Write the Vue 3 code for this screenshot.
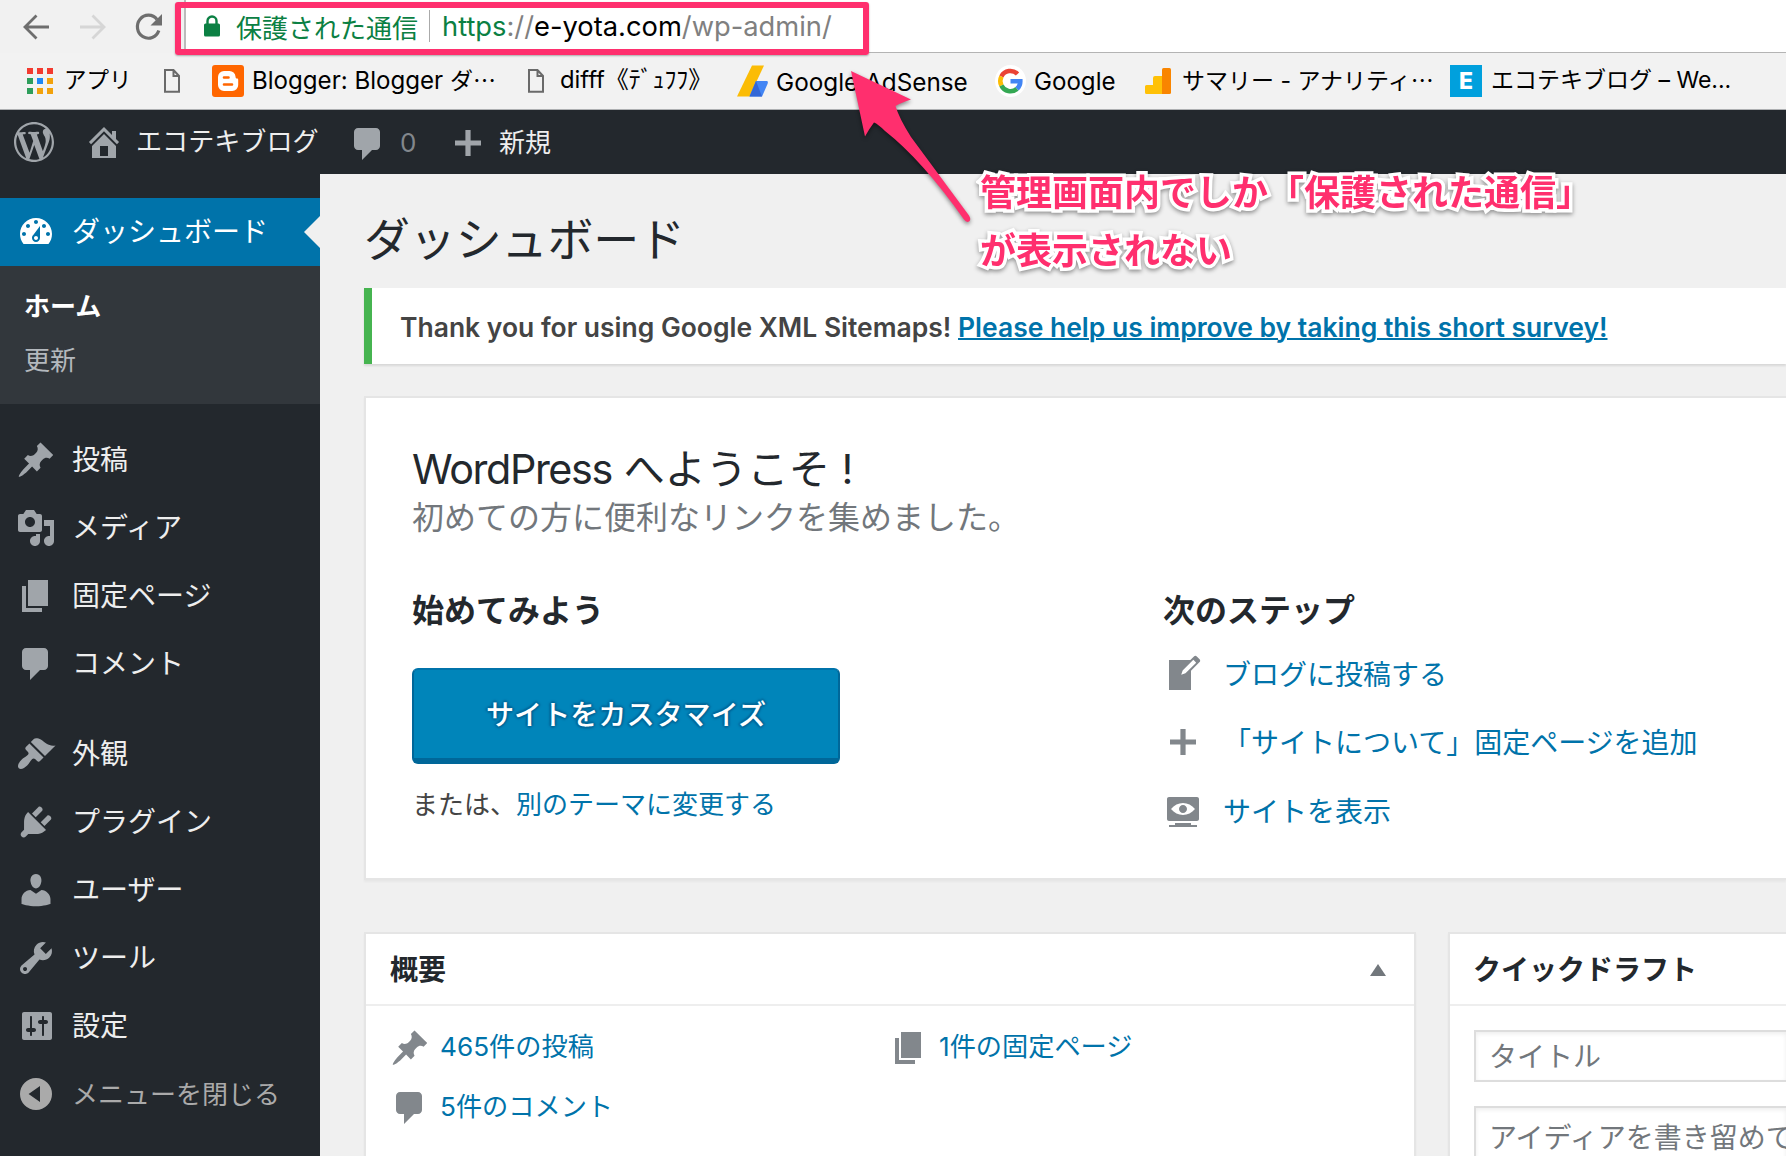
<script setup>
const icons = {
  wordpress: 'M20 10c0-5.51-4.49-10-10-10C4.48 0 0 4.49 0 10c0 5.52 4.48 10 10 10 5.51 0 10-4.48 10-10zM7.78 15.37L4.37 6.22c.55-.02 1.17-.08 1.17-.08.5-.06.44-1.13-.06-1.11 0 0-1.45.11-2.37.11-.18 0-.37 0-.58-.01C4.12 2.69 6.87 1.11 10 1.11c2.33 0 4.45.87 6.05 2.34-.68-.11-1.65.39-1.65 1.58 0 .74.45 1.36.9 2.1.35.61.55 1.36.55 2.46 0 1.49-1.4 5-1.4 5l-3.03-8.37c.54-.02.82-.17.82-.17.5-.05.44-1.25-.06-1.22 0 0-1.44.12-2.38.12-.87 0-2.33-.12-2.33-.12-.5-.03-.56 1.2-.06 1.22l.92.08 1.26 3.41zM17.41 10c.24-.64.74-1.87.43-4.25.7 1.29 1.05 2.71 1.05 4.25 0 3.29-1.73 6.24-4.4 7.78.97-2.59 1.94-5.2 2.92-7.78zM6.1 18.09C3.12 16.65 1.11 13.53 1.11 10c0-1.3.23-2.48.72-3.59C3.25 10.3 4.67 14.2 6.1 18.09zm4.03-6.63l2.58 6.98c-.86.29-1.76.45-2.71.45-.79 0-1.57-.11-2.29-.33.81-2.38 1.62-4.74 2.42-7.1z',
  home: 'M16 8.5l1.53 1.53-1.06 1.06L10 4.6l-6.47 6.49-1.06-1.06L10 2.5l4 4v-2h2v4zm-6-2.46l6 5.99V18H4v-5.97zM12 17v-5H8v5h4z',
  plus: 'M16.5 8.7v2.6h-5.2v5.2H8.7v-5.2H3.5V8.7h5.2V3.5h2.6v5.2z',
  dashboard: 'M3.76 16h12.48c1.1-1.37 1.76-3.11 1.76-5 0-4.42-3.58-8-8-8s-8 3.58-8 8c0 1.89.66 3.63 1.76 5zM10 4c.55 0 1 .45 1 1s-.45 1-1 1-1-.45-1-1 .45-1 1-1zM6 6c.55 0 1 .45 1 1s-.45 1-1 1-1-.45-1-1 .45-1 1-1zm8 0c.55 0 1 .45 1 1s-.45 1-1 1-1-.45-1-1 .45-1 1-1zm-5.37 5.55L12 7v6c0 1.1-.9 2-2 2s-2-.9-2-2c0-.57.24-1.08.63-1.45zM4 10c.55 0 1 .45 1 1s-.45 1-1 1-1-.45-1-1 .45-1 1-1zm12 0c.55 0 1 .45 1 1s-.45 1-1 1-1-.45-1-1 .45-1 1-1zm-5 3c0-.55-.45-1-1-1s-1 .45-1 1 .45 1 1 1 1-.45 1-1z',
  post: 'M10.44 3.02l1.82-1.82 6.36 6.35-1.83 1.82c-1.05-.68-2.48-.57-3.41.36l-.75.75c-.92.93-1.04 2.35-.35 3.41l-1.83 1.82-2.41-2.41-2.8 2.79c-.42.42-3.38 2.71-3.8 2.29s1.86-3.39 2.28-3.81l2.79-2.79L4.1 9.36l1.83-1.82c1.05.69 2.48.57 3.4-.36l.75-.75c.93-.92 1.05-2.35.36-3.41z',
  media: 'M13 11V4c0-.55-.45-1-1-1h-1.67L9 1H5L3.67 3H2c-.55 0-1 .45-1 1v7c0 .55.45 1 1 1h10c.55 0 1-.45 1-1zM7 4.5c1.38 0 2.5 1.12 2.5 2.5S8.38 9.5 7 9.5 4.5 8.38 4.5 7 5.62 4.5 7 4.5zM14 6h5v10.5c0 1.38-1.12 2.5-2.5 2.5S14 17.88 14 16.5s1.12-2.5 2.5-2.5c.17 0 .34.02.5.05V9h-3V6zm-4 8.05V13h2v3.5c0 1.38-1.12 2.5-2.5 2.5S7 17.88 7 16.5 8.12 14 9.5 14c.17 0 .34.02.5.05z',
  page: 'M6 15V2h10v13H6zm-1 1h8v2H3V5h2v11z',
  comment: 'M5 2h9c1.1 0 2 .9 2 2v7c0 1.1-.9 2-2 2h-2l-5 5v-5H5c-1.1 0-2-.9-2-2V4c0-1.1.9-2 2-2z',
  appearance: 'M14.48 11.06L7.41 3.99l1.5-1.5c.5-.56 2.3-.47 3.51.32 1.21.8 1.43 1.28 2.91 2.1 1.18.64 2.45 1.26 4.45.85zm-.71.71L6.7 4.7 4.93 6.47c-.39.39-.39 1.02 0 1.41l1.06 1.06c.39.39.39 1.03 0 1.42-.6.6-1.43 1.11-2.21 1.69-.35.26-.7.53-1.01.84C1.43 14.23.4 16.08 1.4 17.07c.99 1 2.84-.03 4.18-1.36.31-.31.58-.66.85-1.02.57-.78 1.08-1.61 1.69-2.21.39-.39 1.02-.39 1.41 0l1.06 1.06c.39.39 1.02.39 1.41 0z',
  plugins: 'M13.11 4.36L9.87 7.6 8 5.73l3.24-3.24c.35-.34 1.05-.2 1.56.32.52.51.66 1.21.31 1.55zm-8 1.77l.91-1.12 9.01 9.01-1.19.84c-.71.71-2.63 1.16-3.82 1.16H6.14L4.9 17.26c-.59.59-1.54.59-2.12 0-.59-.58-.59-1.53 0-2.12l1.24-1.24v-3.88c0-1.13.4-3.19 1.09-3.89zm7.26 3.97l3.24-3.24c.34-.35 1.04-.21 1.55.31.52.51.66 1.21.31 1.55l-3.24 3.25z',
  users: 'M10 9.25c-2.27 0-2.73-3.44-2.73-3.44C7 4.02 7.82 2 9.97 2c2.16 0 2.98 2.02 2.71 3.81 0 0-.41 3.44-2.68 3.44zm0 2.57L12.72 10c2.39 0 4.52 2.33 4.52 4.53v2.49s-3.65 1.13-7.24 1.13c-3.65 0-7.24-1.13-7.24-1.13v-2.49c0-2.25 1.94-4.48 4.47-4.48z',
  tools: 'M16.68 9.77c-1.34 1.34-3.3 1.67-4.95.99l-5.41 6.52c-.99.99-2.59.99-3.58 0s-.99-2.59 0-3.57l6.52-5.42c-.68-1.65-.35-3.61.99-4.95 1.28-1.28 3.12-1.62 4.72-1.06l-2.89 2.89 2.82 2.82 2.86-2.87c.53 1.58.18 3.39-1.08 4.65zM3.81 16.21c.4.39 1.04.39 1.43 0 .4-.4.4-1.04 0-1.43-.39-.4-1.03-.4-1.43 0-.39.39-.39 1.03 0 1.43z',
  settings: 'M18 16V4c0-.55-.45-1-1-1H4c-.55 0-1 .45-1 1v12c0 .55.45 1 1 1h13c.55 0 1-.45 1-1zM8 11h1c.55 0 1 .45 1 1s-.45 1-1 1H8v1.5c0 .28-.22.5-.5.5s-.5-.22-.5-.5V13H6c-.55 0-1-.45-1-1s.45-1 1-1h1V5.5c0-.28.22-.5.5-.5s.5.22.5.5V11zm5-2h-1c-.55 0-1-.45-1-1s.45-1 1-1h1V5.5c0-.28.22-.5.5-.5s.5.22.5.5V7h1c.55 0 1 .45 1 1s-.45 1-1 1h-1v5.5c0 .28-.22.5-.5.5s-.5-.22-.5-.5V9z',
  collapse: 'M10 2a8 8 0 1 1 0 16a8 8 0 1 1 0-16zM12 6L6.3 10L12 14z',
  write: 'M16.89 1.2l1.41 1.41c.39.39.39 1.02 0 1.41L14 8.33V18H3V3h10.67l1.8-1.8c.4-.39 1.03-.4 1.42 0zm-5.66 8.48l5.37-5.36-1.42-1.42-5.36 5.37-.71 2.12z',
  view: 'M18 14V4c0-.55-.45-1-1-1H3c-.55 0-1 .45-1 1v10c0 .55.45 1 1 1h14c.55 0 1-.45 1-1zm-8-8c2.3 0 4.4 1.14 6 3-1.6 1.86-3.7 3-6 3s-4.4-1.14-6-3c1.6-1.86 3.7-3 6-3zm2 3c0-1.1-.9-2-2-2s-2 .9-2 2 .9 2 2 2 2-.9 2-2zm2 8h3v1H3v-1h3v-1h8v1z',
}

const menuGroups = [
  [
    { icon: 'post', label: '投稿' },
    { icon: 'media', label: 'メディア' },
    { icon: 'page', label: '固定ページ' },
    { icon: 'comment', label: 'コメント' },
  ],
  [
    { icon: 'appearance', label: '外観' },
    { icon: 'plugins', label: 'プラグイン' },
    { icon: 'users', label: 'ユーザー' },
    { icon: 'tools', label: 'ツール' },
    { icon: 'settings', label: '設定' },
  ],
]

const steps = [
  { icon: 'write', label: 'ブログに投稿する' },
  { icon: 'plus', label: '「サイトについて」固定ページを追加' },
  { icon: 'view', label: 'サイトを表示' },
]

const glance = [
  { icon: 'post', label: '465件の投稿' },
  { icon: 'page', label: '1件の固定ページ' },
  { icon: 'comment', label: '5件のコメント' },
]

const appColors = ['#f33b30', '#f33b30', '#f33b30', '#2e9e5b', '#1e88f7', '#f2a20c', '#2e9e5b', '#f2a20c', '#f2a20c']
</script>

<template>
  <div class="screen" lang="ja">
    <header class="toolbar">
      <div class="nav">
        <svg class="nav-back" width="28" height="28" viewBox="0 0 28 28"><path d="M27 14H3M14.500 2.500L3 14l11.500 11.500" /></svg>
        <svg class="nav-forward" width="28" height="28" viewBox="0 0 28 28"><path d="M1 14h24M13.500 2.500L25 14L13.500 25.500" /></svg>
        <svg class="nav-reload" width="30" height="30" viewBox="0 0 30 30">
          <path d="M24.800 18.500A11 11.500 0 1 1 23 7.500" fill="none" stroke-width="3.200" />
          <path d="M28 2v11.500H16.500z" class="solid" />
        </svg>
      </div>
      <div class="omnibox">
        <svg class="lock" width="18" height="22" viewBox="0 0 18 22">
          <path d="M4.500 10V6a4.500 4.500 0 0 1 9 0v4" fill="none" stroke="#0b8043" stroke-width="2.400" />
          <rect x="1" y="8.500" width="16" height="13" rx="1.500" fill="#0b8043" />
        </svg>
        <span class="secure">保護された通信</span>
        <span class="divider"></span>
        <span class="url"><b>https</b>://<i>e-yota.com</i>/wp-admin/</span>
      </div>
    </header>

    <nav class="bookmarks">
      <div class="bookmark apps">
        <div class="apps-grid"><span v-for="(c, i) in appColors" :key="i" :style="{ background: c }"></span></div>
        <span class="label">アプリ</span>
      </div>
      <div class="bookmark">
        <svg class="file" width="16" height="26" viewBox="0 0 16 26"><path d="M1 2h8.500L15 8v15.800H1zM9.500 2v6H15" /></svg>
      </div>
      <div class="bookmark blogger">
        <svg width="32" height="32" viewBox="0 0 32 32">
          <rect width="32" height="32" rx="3" fill="#ff6600" />
          <path d="M12 6h5.500a6 6 0 0 1 6 5.500c.1 1.600.5 2 1.500 2c.8 0 1.200.5 1.200 1.200V20a6 6 0 0 1-6 6H12a6 6 0 0 1-6-6v-8a6 6 0 0 1 6-6z" fill="#fff" />
          <path d="M12 12.500h4.500M12 19.500h8" stroke="#ff6600" stroke-width="2.600" stroke-linecap="round" />
        </svg>
        <span class="label">Blogger: Blogger <span class="kana">ダ<span class="dots">…</span></span></span>
      </div>
      <div class="bookmark difff">
        <svg class="file" width="16" height="26" viewBox="0 0 16 26"><path d="M1 2h8.500L15 8v15.800H1zM9.500 2v6H15" /></svg>
        <span class="label">difff《ﾃﾞｭﾌﾌ》</span>
      </div>
      <div class="bookmark adsense">
        <svg width="31" height="32" viewBox="0 0 31 32">
          <path d="M15 0.500h12L12.500 31.500H0z" fill="#fbbc05" />
          <path d="M19 16h11q1.500.5.500 3L25 31.500H12.500z" fill="#4285f4" />
          <path d="M19 16L25 31.500H12.500z" fill="#3367d6" />
        </svg>
        <span class="label">Google AdSense</span>
      </div>
      <div class="bookmark google">
        <svg width="31" height="32" viewBox="0 0 31 32">
          <ellipse cx="15.500" cy="16" rx="15.500" ry="16" fill="#fff" />
          <g fill="none" stroke-width="4.600">
            <path d="M6.400 11.500A10 10 0 0 1 22.500 9" stroke="#ea4335" />
            <path d="M6.400 20.500A10 10 0 0 1 6.400 11.500" stroke="#fbbc05" />
            <path d="M22 23.800A10 10 0 0 1 6.400 20.500" stroke="#34a853" />
            <path d="M15.500 16.200H25.300A10 10 0 0 1 22 23.800" stroke="#4285f4" />
          </g>
        </svg>
        <span class="label">Google</span>
      </div>
      <div class="bookmark analytics">
        <svg width="26" height="26" viewBox="0 0 26 26">
          <path d="M1.500 17H8V10q0-2 2-2h7v18H1.500Q0 26 0 24.500v-6Q0 17 1.500 17z" fill="#ffc107" />
          <path d="M18.500 0h6Q26 0 26 1.500v23q0 1.500-1.500 1.500H17V1.500Q17 0 18.500 0z" fill="#f98500" />
        </svg>
        <span class="label">サマリー - アナリティ<span class="dots">…</span></span>
      </div>
      <div class="bookmark ecoteki">
        <span class="favicon">E</span>
        <span class="label">エコテキブログ – We...</span>
      </div>
    </nav>

    <div class="adminbar">
      <svg class="dashicon wp" viewBox="0 0 20 20"><path :d="icons.wordpress" /></svg>
      <svg class="dashicon home" viewBox="0 0 20 20"><path :d="icons.home" /></svg>
      <span class="site">エコテキブログ</span>
      <svg class="dashicon bubble" viewBox="0 0 20 20"><path :d="icons.comment" /></svg>
      <span class="count">0</span>
      <svg class="dashicon add" viewBox="0 0 20 20"><path :d="icons.plus" /></svg>
      <span class="new">新規</span>
    </div>

    <div class="body">
      <aside class="sidebar">
        <a class="item current">
          <svg class="dashicon" viewBox="0 0 20 20"><path :d="icons.dashboard" /></svg>
          <span>ダッシュボード</span>
        </a>
        <div class="submenu">
          <a class="on">ホーム</a>
          <a>更新</a>
        </div>
        <div v-for="(group, g) in menuGroups" :key="g" class="group">
          <a v-for="m in group" :key="m.label" class="item">
            <svg class="dashicon" viewBox="0 0 20 20"><path :d="icons[m.icon]" /></svg>
            <span>{{ m.label }}</span>
          </a>
        </div>
        <a class="item collapse">
          <svg class="dashicon" viewBox="0 0 20 20"><path fill-rule="evenodd" :d="icons.collapse" /></svg>
          <span>メニューを閉じる</span>
        </a>
      </aside>

      <main class="content">
        <h1>ダッシュボード</h1>
        <div class="notice">
          <p>Thank you for using Google XML Sitemaps! <a>Please help us improve by taking this short survey!</a></p>
        </div>

        <section class="welcome">
          <h2><span class="brand">WordPress</span> へようこそ !</h2>
          <p class="about">初めての方に便利なリンクを集めました。</p>
          <div class="columns">
            <div class="start">
              <h3>始めてみよう</h3>
              <button type="button">サイトをカスタマイズ</button>
              <p>または、<a>別のテーマに変更する</a></p>
            </div>
            <div class="next">
              <h3>次のステップ</h3>
              <ul>
                <li v-for="s in steps" :key="s.label">
                  <svg class="dashicon" viewBox="0 0 20 20"><path :d="icons[s.icon]" /></svg>
                  <a>{{ s.label }}</a>
                </li>
              </ul>
            </div>
          </div>
        </section>

        <div class="boxes">
          <section class="box overview">
            <header><h2>概要</h2><span class="toggle"></span></header>
            <ul>
              <li v-for="x in glance" :key="x.label">
                <svg class="dashicon" viewBox="0 0 20 20"><path :d="icons[x.icon]" /></svg>
                <a>{{ x.label }}</a>
              </li>
            </ul>
          </section>
          <section class="box quick">
            <header><h2>クイックドラフト</h2></header>
            <div class="field title">タイトル</div>
            <div class="field draft">アイディアを書き留めて</div>
          </section>
        </div>
      </main>
    </div>

    <div class="highlight"></div>
    <svg class="arrow" width="150" height="180" viewBox="840 60 150 180">
      <path d="M851 71L911 99.500Q900 103 895.500 106Q899 118 911 137L969 215.500Q971.500 219.500 969 221.500Q966.500 223 964 219.500Q922 160 885 131Q878 124 874 122.500Q869 129 865 136.500Z" />
    </svg>
    <p class="caption">管理画面内でしか「保護された通信」<br>が表示されない</p>
  </div>
</template>

<style>
body { margin: 0; }
</style>

<style scoped>
.screen {
  position: relative;
  width: 1786px;
  height: 1156px;
  overflow: hidden;
  display: flex;
  flex-direction: column;
  background: #f0f0f0;
  font-family: Inter, "Noto Sans CJK JP", sans-serif;
  color: #444;
}
h1, h2, h3, p, ul { margin: 0; padding: 0; font-weight: 400; }
ul { list-style: none; }
span, a, p, h1, h2, h3, li { white-space: nowrap; }
svg { flex: none; display: block; }
.dashicon { width: 40px; height: 40px; fill: #82878c; }

.toolbar { display: flex; height: 53px; background: #f1f1f1; flex: none; }
.nav { display: flex; width: 184px; box-sizing: border-box; padding-left: 22px; align-items: center; }
.nav svg { fill: none; stroke: #6e6e6e; stroke-width: 2.8; }
.nav-back { margin-right: 29px; }
.nav .nav-forward { stroke: #d6d6d6; margin-right: 27px; }
.nav .solid { fill: #6e6e6e; stroke: none; }
.omnibox {
  flex: 1;
  display: flex;
  align-items: center;
  box-sizing: border-box;
  padding: 0 0 0 17px;
  background: #fff;
  border-left: 2px solid #bbb;
  border-bottom: 1px solid #b4b4b4;
  font-size: 26px;
}
.lock { margin-right: 15px; }
.secure { color: #0b8043; width: 193px; }
.divider { width: 1px; height: 32px; background: #aaa; margin-right: 12px; }
.url { color: #808080; font-size: 27.3px; }
.url b { color: #0b8043; font-weight: 400; }
.url i { color: #000; font-style: normal; }

.bookmarks {
  display: grid;
  grid-template-columns: 137px 48px 316px 209px 258px 150px 305px 1fr;
  align-items: center;
  flex: none;
  height: 57px;
  box-sizing: border-box;
  padding-left: 27px;
  background: #f2f2f2;
  border-bottom: 1px solid #aeb0b2;
  color: #000;
  font-size: 23px;
}
.bookmark { display: flex; align-items: center; gap: 9px; }
.bookmark.analytics { gap: 11px; }
.bookmark.apps { gap: 11px; font-size: 22.5px; }
.bookmark.difff { gap: 16px; font-size: 23.8px; }
.blogger, .google { font-size: 24.1px; }
.adsense { font-size: 24.3px; }
.bookmark.blogger, .bookmark.adsense, .bookmark.google { gap: 8px; }
.label { line-height: 34px; padding-bottom: 2px; }
.adsense .label, .google .label { padding: 1px 0 0; }
.kana { font-size: 23px; }
.apps-grid { display: grid; grid-template-columns: repeat(3, 6px); gap: 4px; }
.apps-grid span { height: 6px; }
.file path { fill: none; stroke: #6a6a6a; stroke-width: 2; }
.dots { font-family: "Noto Sans CJK JP", sans-serif; }
.favicon {
  width: 32px;
  height: 32px;
  background: #00a0dd;
  color: #fff;
  font-weight: 800;
  line-height: 32px;
  text-align: center;
}

.adminbar {
  display: flex;
  align-items: center;
  flex: none;
  height: 64px;
  box-sizing: border-box;
  padding-left: 14px;
  background: #23282d;
  color: #eee;
  font-size: 26px;
}
.adminbar .dashicon { fill: #a0a5aa; }
.adminbar .home { margin-left: 30px; }
.adminbar .site { margin-left: 12px; width: 212px; font-size: 26.1px; padding-bottom: 4px; }
.adminbar .bubble { margin-top: 4px; }
.adminbar .count { margin-left: 12px; width: 48px; color: #82878c; }
.adminbar .add { margin-top: 2px; }
.adminbar .new { margin-left: 11px; padding-bottom: 4px; }

.body { display: flex; flex: 1; min-height: 0; }
.sidebar { width: 320px; flex: none; box-sizing: border-box; padding-top: 24px; background: #23282d; }
.item { display: flex; align-items: center; height: 68px; padding-left: 16px; gap: 16px; color: #eee; font-size: 28px; }
.item span { padding-bottom: 4px; }
.item .dashicon { fill: #a0a5aa; }
.item.current { position: relative; background: #0073aa; color: #fff; }
.item.current .dashicon { fill: #fff; }
.item.current::after {
  content: "";
  position: absolute;
  right: 0;
  top: 18px;
  border: 16px solid transparent;
  border-right-color: #f0f0f0;
  border-left: 0;
}
.submenu { display: flex; flex-direction: column; height: 138px; box-sizing: border-box; padding: 13px 24px 0; background: #32373c; }
.submenu a { height: 54px; line-height: 55px; font-size: 26px; color: #b4b9be; }
.submenu .on { color: #fff; font-weight: 700; }
.group { margin-top: 22px; }
.item.collapse { color: #aaa; font-size: 26px; }
.item.collapse .dashicon { fill: #aaa; }

.content { width: 1466px; box-sizing: border-box; padding-left: 44px; flex: none; }
h1 { font-size: 46px; line-height: 60px; padding-top: 35px; height: 114px; box-sizing: border-box; color: #23282d; letter-spacing: -0.15px; }
.notice {
  height: 76px;
  box-sizing: border-box;
  border-left: 8px solid #46b450;
  background: #fff;
  box-shadow: 0 2px 2px rgba(0, 0, 0, .1);
  padding-left: 28px;
  font-size: 26.47px;
}
.notice p { font-weight: 600; line-height: 78px; }
a { color: #0073aa; }
.notice a { text-decoration: underline; text-decoration-thickness: 2px; }
.sidebar a { color: inherit; }
.sidebar .item { color: #eee; }
.sidebar .submenu a { color: #b4b9be; }
.sidebar .submenu .on, .sidebar .current { color: #fff; }
.sidebar .collapse { color: #aaa; }

.welcome {
  height: 484px;
  margin-top: 32px;
  box-sizing: border-box;
  border: 2px solid #e5e5e5;
  border-right: 0;
  background: #fff;
  box-shadow: 0 2px 2px rgba(0, 0, 0, .04);
  padding: 44px 0 0 46px;
}
.welcome h2 { font-size: 41.3px; line-height: 54px; color: #23282d; }
.brand { letter-spacing: -1.4px; }
.about { font-size: 32px; line-height: 44px; color: #72777c; }
.columns { display: flex; margin-top: 49px; }
.start { width: 751px; }
h3 { font-size: 32px; font-weight: 700; line-height: 44px; color: #23282d; }
button {
  display: block;
  width: 428px;
  height: 96px;
  margin: 35px 0 0;
  padding: 0 0 4px;
  border: 2px solid #006799;
  border-top-color: #0073aa;
  border-bottom-width: 6px;
  border-radius: 6px;
  background: #0085ba;
  color: #fff;
  font: 500 28.1px Inter, "Noto Sans CJK JP", sans-serif;
  text-shadow: 0 -2px 2px #006799, 2px 0 2px #006799, 0 2px 2px #006799, -2px 0 2px #006799;
}
.start p { margin-top: 21px; font-size: 26px; line-height: 40px; }
.next ul { margin-top: 7px; }
.next li { display: flex; align-items: center; height: 68.3px; gap: 20px; font-size: 28px; }
.next li a { padding-bottom: 2px; }

.boxes { display: flex; gap: 32px; margin-top: 52px; }
.box {
  box-sizing: border-box;
  height: 260px;
  border: 2px solid #e5e5e5;
  background: #fff;
  box-shadow: 0 2px 2px rgba(0, 0, 0, .04);
}
.overview { width: 1052px; flex: none; }
.quick { flex: 1; min-width: 0; border-right: 0; }
.box header { display: flex; align-items: center; justify-content: space-between; height: 70px; padding: 0 28px 0 24px; border-bottom: 2px solid #eee; }
.quick header { padding-left: 23px; }
.box h2 { font-size: 28px; font-weight: 700; line-height: 40px; padding-top: 2px; color: #23282d; }
.toggle { margin-top: 2px; border: 8px solid transparent; border-bottom: 12px solid #72777c; border-top: 0; }
.overview ul { display: grid; grid-template-columns: 499px 1fr; padding: 12px 0 0 24px; }
.overview li { display: flex; align-items: center; height: 60px; gap: 10px; font-size: 26.2px; }
.overview li a { padding-bottom: 7px; }
.field { box-sizing: border-box; margin-left: 24px; border: 2px solid #ddd; border-right: 0; padding-left: 13px; font-size: 28px; color: #72777c; white-space: nowrap; box-shadow: inset 0 2px 4px rgba(0, 0, 0, .07); }
.title { margin-top: 24px; height: 52px; line-height: 50px; }
.draft { margin-top: 24px; height: 120px; line-height: 60px; }

.highlight {
  position: absolute;
  left: 175px;
  top: 2px;
  width: 694px;
  height: 53px;
  box-sizing: border-box;
  border: 6px solid #ff2f6e;
  border-radius: 3px;
  box-shadow: 0 1px 2px rgba(0, 0, 0, .3);
}
.arrow { position: absolute; left: 840px; top: 60px; filter: drop-shadow(0 2px 2px rgba(0, 0, 0, .45)); }
.arrow path { fill: #ff2f6e; }
.caption {
  position: absolute;
  left: 980px;
  top: 165px;
  font-size: 36px;
  font-weight: 700;
  line-height: 57.5px;
  color: #ff2f6e;
  -webkit-text-stroke: 7px #fff;
  paint-order: stroke fill;
  stroke-linejoin: round;
  filter: drop-shadow(0 2px 2px rgba(0, 0, 0, .4));
}
</style>
